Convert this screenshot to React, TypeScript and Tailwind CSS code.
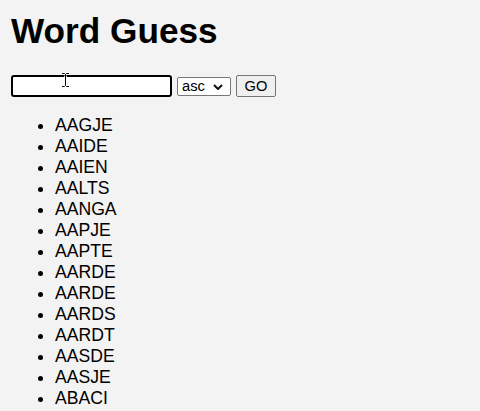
import { useState } from 'react';

const words = [
  'AAGJE',
  'AAIDE',
  'AAIEN',
  'AALTS',
  'AANGA',
  'AAPJE',
  'AAPTE',
  'AARDE',
  'AARDE',
  'AARDS',
  'AARDT',
  'AASDE',
  'AASJE',
  'ABACI',
];

export default function App() {
  const [query, setQuery] = useState('');
  const [order, setOrder] = useState('asc');

  return (
    <div
      className="min-h-[411px] bg-[#f3f3f3] pl-[11px] pt-[11px] text-black"
      style={{ fontFamily: '"Liberation Sans", Arial, sans-serif' }}
    >
      <h1 className="text-[35.2px] font-bold leading-[40px]">Word Guess</h1>

      <div className="relative mt-[24px] flex h-[22px] items-center">
        <input
          value={query}
          onChange={(e) => setQuery(e.target.value)}
          className="block h-[22px] w-[161px] rounded-[3px] border-2 border-black bg-white px-[3px] text-[14.7px] outline-none"
        />
        <div className="relative ml-[5px] h-[19px] w-[54px]">
          <select
            value={order}
            onChange={(e) => setOrder(e.target.value)}
            className="block h-[19px] w-[54px] appearance-none rounded-[2px] border border-[#767676] bg-white py-0 pl-[4px] text-[14.7px] leading-[17px]"
          >
            <option value="asc">asc</option>
            <option value="desc">desc</option>
          </select>
          <svg
            className="pointer-events-none absolute right-[8px] top-[7px]"
            width="10"
            height="6"
            viewBox="0 0 10 6"
          >
            <polyline points="1,1 5,5 9,1" fill="none" stroke="#111" strokeWidth="2" />
          </svg>
        </div>
        <button className="ml-[5px] block h-[22px] w-[40px] rounded-[2px] border border-[#767676] bg-[#efefef] text-[14.7px] leading-[18px]">
          GO
        </button>

        {/* mouse pointer over the input */}
        <svg
          className="pointer-events-none absolute left-[50px] top-[-3px]"
          width="9"
          height="16"
          viewBox="0 0 9 16"
        >
          <path
            d="M1 1.5 H3.5 L4.5 2.5 L5.5 1.5 H8 M4.5 2.5 V13.5 M1 14.5 H3.5 L4.5 13.5 L5.5 14.5 H8"
            fill="none"
            stroke="#fff"
            strokeWidth="2.6"
          />
          <path
            d="M1 1.5 H3.5 L4.5 2.5 L5.5 1.5 H8 M4.5 2.5 V13.5 M1 14.5 H3.5 L4.5 13.5 L5.5 14.5 H8"
            fill="none"
            stroke="#000"
            strokeWidth="1"
          />
        </svg>
      </div>

      <ul className="mt-[18px] list-disc pl-[44px] text-[17.6px] leading-[21px]">
        {words.map((word, i) => (
          <li key={i}>{word}</li>
        ))}
      </ul>
    </div>
  );
}
